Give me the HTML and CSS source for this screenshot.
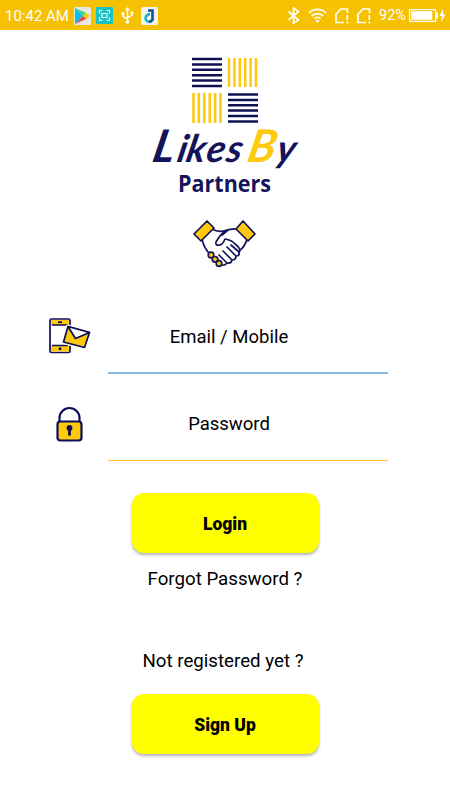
FILE: index.html
```
<!DOCTYPE html>
<html lang="en">
<head>
<meta charset="UTF-8" />
<meta name="viewport" content="width=device-width, initial-scale=1.0" />
<title>LikesBy Partners - Login</title>
<link rel="stylesheet" href="styles.css">
</head>
<body>

<header class="status-bar">
    <div class="status-left">
        <span class="clock">10:42 AM</span>
        <svg class="app" width="17" height="18" viewBox="0 0 17 18">
            <rect width="17" height="18" rx="1.5" fill="#e9e6df"/>
            <path d="M1 1v16l8-8z" fill="#08bfe5"/>
            <path d="M1 1l8 8 3-3z" fill="#32d58b"/>
            <path d="M12 6L9 9l3 3 4-3z" fill="#ffc900"/>
            <path d="M1 17l8-8 3 3z" fill="#f23d49"/>
        </svg>
        <svg class="app" width="17" height="17" viewBox="0 0 17 17">
            <rect width="17" height="17" rx="1" fill="#18c3c4"/>
            <path d="M3.5 6.5v-3h3M10.5 3.5h3v3M13.5 10.5v3h-3M6.5 13.5h-3v-3M6 6.5h5v4H6z" fill="none" stroke="#d9ffff" stroke-width="1.2"/>
        </svg>
        <svg class="usb" width="13" height="17" viewBox="0 0 13 17">
            <path d="M6.5 2v13M6.5 12L2 9.5V7M6.5 10.5L11 8.5V5.5" fill="none" stroke="#fff" stroke-width="1.5"/>
            <path d="M6.5 0L9 3.5H4z" fill="#fff"/>
            <circle cx="6.5" cy="15" r="1.8" fill="#fff"/>
            <circle cx="2" cy="6.7" r="1.6" fill="#fff"/>
            <path d="M9.7 4.5h2.7v2.7H9.7z" fill="#fff"/>
        </svg>
        <svg class="app" width="17" height="18" viewBox="0 0 17 18">
            <rect width="17" height="18" rx="2" fill="#f5f3ee"/>
            <path d="M9 7.5a3.7 3.7 0 1 0 3 3.7" fill="none" stroke="#1bb6c9" stroke-width="2.6"/>
            <path d="M7 3.5h4.5v7.5a3.5 3.5 0 0 1-3.5 3.7" fill="none" stroke="#1650a0" stroke-width="2.6"/>
        </svg>
    </div>
    <div class="status-right">
        <svg width="13" height="17" viewBox="0 0 13 17"><path d="M1.5 4.5l10 8.500-5 3.200V.8l5 3.700-10 8.500" fill="none" stroke="#fff" stroke-width="1.7"/></svg>
        <svg width="19" height="15" viewBox="0 0 19 15"><path d="M1 5a12 12 0 0 1 17 0M3.7 8a8.200 8.200 0 0 1 11.600 0M6.300 10.700a4.600 4.600 0 0 1 6.400 0" fill="none" stroke="#fff" stroke-width="1.8"/><circle cx="9.5" cy="13" r="1.6" fill="#fff"/></svg>
        <svg width="14" height="16" viewBox="0 0 14 16"><path d="M9 14.5H1V6l5-5h6.500v4M12.300 7v5M12.300 13.500v2" fill="none" stroke="#fff" stroke-width="1.7"/></svg>
        <svg width="14" height="16" viewBox="0 0 14 16"><path d="M9 14.5H1V6l5-5h6.500v4M12.300 7v5M12.300 13.500v2" fill="none" stroke="#fff" stroke-width="1.7"/></svg>
        <span class="percent">92%</span>
        <svg class="battery" width="37" height="13" viewBox="0 0 37 13"><path d="M.6.6h26v11.800H.6z" fill="none" stroke="#fff" stroke-width="1.2"/><path d="M2.300 2.300h21v8.400h-21zM27 3.500h2v6h-2zM34 0l-3.500 7h2.500l-1 6 4.500-7.500h-2.500z" fill="#fff"/></svg>
    </div>
</header>

<main>
    <div class="brand">
        <svg class="bars" width="66" height="66" viewBox="0 0 66 66" fill="none" stroke-width="2.5">
            <path d="M0 2h30M0 7.400h30M0 12.800h30M0 18.200h30M0 23.500h30M0 28.900h30M36 37.500h30M36 42.900h30M36 48.300h30M36 53.600h30M36 59h30M36 64.400h30" stroke="#0f1155"/>
            <path d="M37 1v29M42.400 1v29M47.800 1v29M53.200 1v29M58.600 1v29M64 1v29M1.500 36v30M6.900 36v30M12.300 36v30M17.700 36v30M23.100 36v30M28.500 36v30" stroke="#ffc90c"/>
        </svg>
        <svg class="wordmark" width="150" height="50" viewBox="0 0 150 50">
            <g transform="translate(7 0) skewX(-12)">
                <text y="34"><tspan x="1" font-size="45">L</tspan><tspan x="26 35 55 75">ikes</tspan><tspan class="gold" x="96" font-size="45">B</tspan><tspan x="125">y</tspan></text>
            </g>
        </svg>
        <svg class="partners" width="94" height="30" viewBox="0 0 94 30"><text x="0" y="21" textLength="93" lengthAdjust="spacingAndGlyphs">Partners</text></svg>
        <svg class="handshake" width="64" height="48" viewBox="0 0 64 48" fill="none" stroke="#14145a" stroke-width="1.7" stroke-linejoin="round" stroke-linecap="round">
            <path d="M19 9q7 4 15 1M9 19q2 9 7 14M43 9q-6-1-12 3-4 3-8 10-1 4 4 3 3-1 5-6 7 1 10 5 7 5 4 9M54 19q-2 8-8 12"/>
            <path d="M38 25l8 7q1 4-3 4L34 27M43 36q0 4-4 4l-9-9M39 40q-1 4-5 3l-8-8M34 43q-2 3-7 2M29 15l5-4"/>
            <path d="M1 14L14 1l7 7L8 21zM62 14L50 1l-7 8 12 12z" fill="#ffc90c"/>
            <circle cx="18" cy="35" r="2.8" fill="#ffc90c"/>
            <circle cx="22" cy="39.3" r="2.8" fill="#ffc90c"/>
            <circle cx="26" cy="43.5" r="2.8" fill="#ffc90c"/>
        </svg>
    </div>

    <form class="login">
        <div class="field email">
            <svg width="42" height="36" viewBox="0 0 42 36" stroke="#0d0d58" stroke-width="1.7" stroke-linejoin="round">
                <rect x="1" y="1" width="20" height="33.5" rx="1.5" fill="#fff"/>
                <path d="M2 2h18v5H2zM2 28h18v5.500H2z" fill="#ffc90c" stroke="none"/>
                <path d="M3 7h16M3 27.500h16"/>
                <path d="M9 4.200h4"/>
                <circle cx="11" cy="30.8" r="1.5" fill="#0d0d58" stroke="none"/>
                <path d="M19 8.500l21.500 6-5 15-21-5.500z" fill="#ffc90c" stroke="#fff" stroke-width="4"/>
                <path d="M19 8.500l21.500 6-5 15-21-5.500z" fill="#ffc90c"/>
                <path d="M19 8.500l7.500 12 14-6z" fill="#fff"/>
            </svg>
            <label>Email / Mobile</label>
        </div>
        <div class="field password">
            <svg width="27" height="36" viewBox="0 0 27 36" fill="none" stroke="#0d0d58" stroke-width="2.2">
                <path d="M3.500 16v-4a10 10 0 0 1 20 0v4"/>
                <rect x="1.5" y="15.5" width="24" height="19" rx="3" fill="#ffc90c"/>
                <circle cx="13.5" cy="22" r="2.9" fill="#0d0d58" stroke="none"/>
                <path d="M13.500 22v6.500" stroke-width="2.8" stroke-linecap="round"/>
            </svg>
            <label>Password</label>
        </div>
        <button type="button">Login</button>
        <p class="forgot">Forgot Password ?</p>
        <p class="register">Not registered yet ?</p>
        <button type="button">Sign Up</button>
    </form>
</main>

</body>
</html>
```
FILE: styles.css
```
* {
    box-sizing: border-box;
}

body {
    margin: 0;
    height: 800px;
    background: #fff;
    color: #000;
    font-family: Roboto, sans-serif;
    overflow: hidden;
}

svg {
    display: block;
    flex: none;
}

.status-bar {
    height: 30px;
    padding: 1px 4px 0 5px;
    background: #f5c100;
    display: flex;
    align-items: center;
    justify-content: space-between;
}

.status-left,
.status-right {
    display: flex;
    align-items: center;
}

.clock,
.percent {
    color: #fff;
    font-size: 15px;
    line-height: 24px;
    white-space: nowrap;
}

.clock {
    width: 65px;
}

.percent {
    width: 27px;
    font-size: 14.5px;
}

.app,
.usb {
    margin-left: 4px;
}

.app + .app {
    margin-left: 5px;
}

.usb {
    margin: 0 3px 0 8px;
}

.status-right {
    gap: 8px;
}

.battery {
    margin-left: -5px;
}

.brand {
    display: flex;
    flex-direction: column;
    align-items: center;
    padding-top: 27px;
}

.wordmark {
    margin-top: 5px;
    fill: #14145a;
    font: italic 700 38px Lato, sans-serif;
    overflow: visible;
}

.gold {
    fill: #ffc90c;
}

.partners {
    margin: -7px 0 -5px;
    fill: #14145a;
    font: 700 23px "Open Sans", sans-serif;
    overflow: visible;
}

.handshake {
    margin-top: 24px;
}

.login {
    display: flex;
    flex-direction: column;
    align-items: center;
    margin-top: 31px;
}

.field {
    width: 450px;
    display: grid;
    grid-template-columns: 107.5px 280px;
    align-items: center;
}

.field svg {
    margin-left: 49px;
}

.email svg {
    margin-top: -1px;
}

.password svg {
    margin-left: 56px;
}

.field label {
    height: 75px;
    padding: 0 37px 0 0;
    border-bottom: 1px solid #ffc20e;
    line-height: 76px;
    font-size: 18.5px;
    text-align: center;
}

.email label {
    border-bottom: 2px solid #84bbe0;
}

.password {
    margin-top: 12px;
}

button {
    width: 187px;
    height: 60px;
    padding: 1px 0 0;
    border: 0;
    border-radius: 12px;
    background: #ffff00;
    box-shadow: 0 2px 3px rgba(0, 0, 0, 0.3);
    font: 900 17.5px Roboto, sans-serif;
    color: #000;
}

.password + button {
    margin-top: 32px;
}

p {
    margin: 0;
    font-size: 18.7px;
    line-height: 22px;
}

.forgot {
    margin-top: 15px;
}

.register {
    margin: 60px 4px 22px 0;
}
```
